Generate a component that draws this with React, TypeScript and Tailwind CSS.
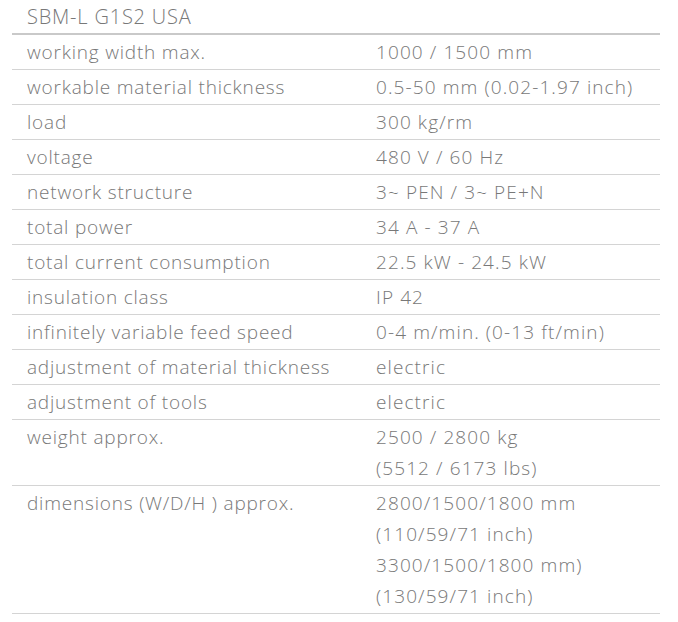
const ROWS: Array<[string, string[]]> = [
  ["working width max.", ["1000 / 1500 mm"]],
  ["workable material thickness", ["0.5-50 mm (0.02-1.97 inch)"]],
  ["load", ["300 kg/rm"]],
  ["voltage", ["480 V / 60 Hz"]],
  ["network structure", ["3~ PEN / 3~ PE+N"]],
  ["total power", ["34 A - 37 A"]],
  ["total current consumption", ["22.5 kW - 24.5 kW"]],
  ["insulation class", ["IP 42"]],
  ["infinitely variable feed speed", ["0-4 m/min. (0-13 ft/min)"]],
  ["adjustment of material thickness", ["electric"]],
  ["adjustment of tools", ["electric"]],
  ["weight approx.", ["2500 / 2800 kg", "(5512 / 6173 lbs)"]],
  [
    "dimensions (W/D/H ) approx.",
    [
      "2800/1500/1800 mm",
      "(110/59/71 inch)",
      "3300/1500/1800 mm)",
      "(130/59/71 inch)",
    ],
  ],
];

export default function App() {
  return (
    <div
      className="bg-white w-[678px] h-[622px] pl-3 text-[#787878] font-light tracking-[0.8px]"
      style={{ fontFamily: '"Open Sans", "Liberation Sans", sans-serif' }}
    >
      <div className="w-[648px]">
        {/* Title */}
        <div className="h-[35px] border-b-2 border-[#c9c9c9] pl-[15px] pt-[1px] text-[20px] leading-[31px]">
          SBM-L G1S2 USA
        </div>

        {ROWS.map(([label, values]) => (
          <div
            key={label}
            className="grid grid-cols-[364px_1fr] border-b border-[#d4d4d4] pt-[2px] pb-[1px] text-[19px] leading-[31px]"
          >
            <div className="pl-[15px]">{label}</div>
            <div className="tracking-[1.1px]">
              {values.map((v) => (
                <div key={v}>{v}</div>
              ))}
            </div>
          </div>
        ))}
      </div>
    </div>
  );
}
